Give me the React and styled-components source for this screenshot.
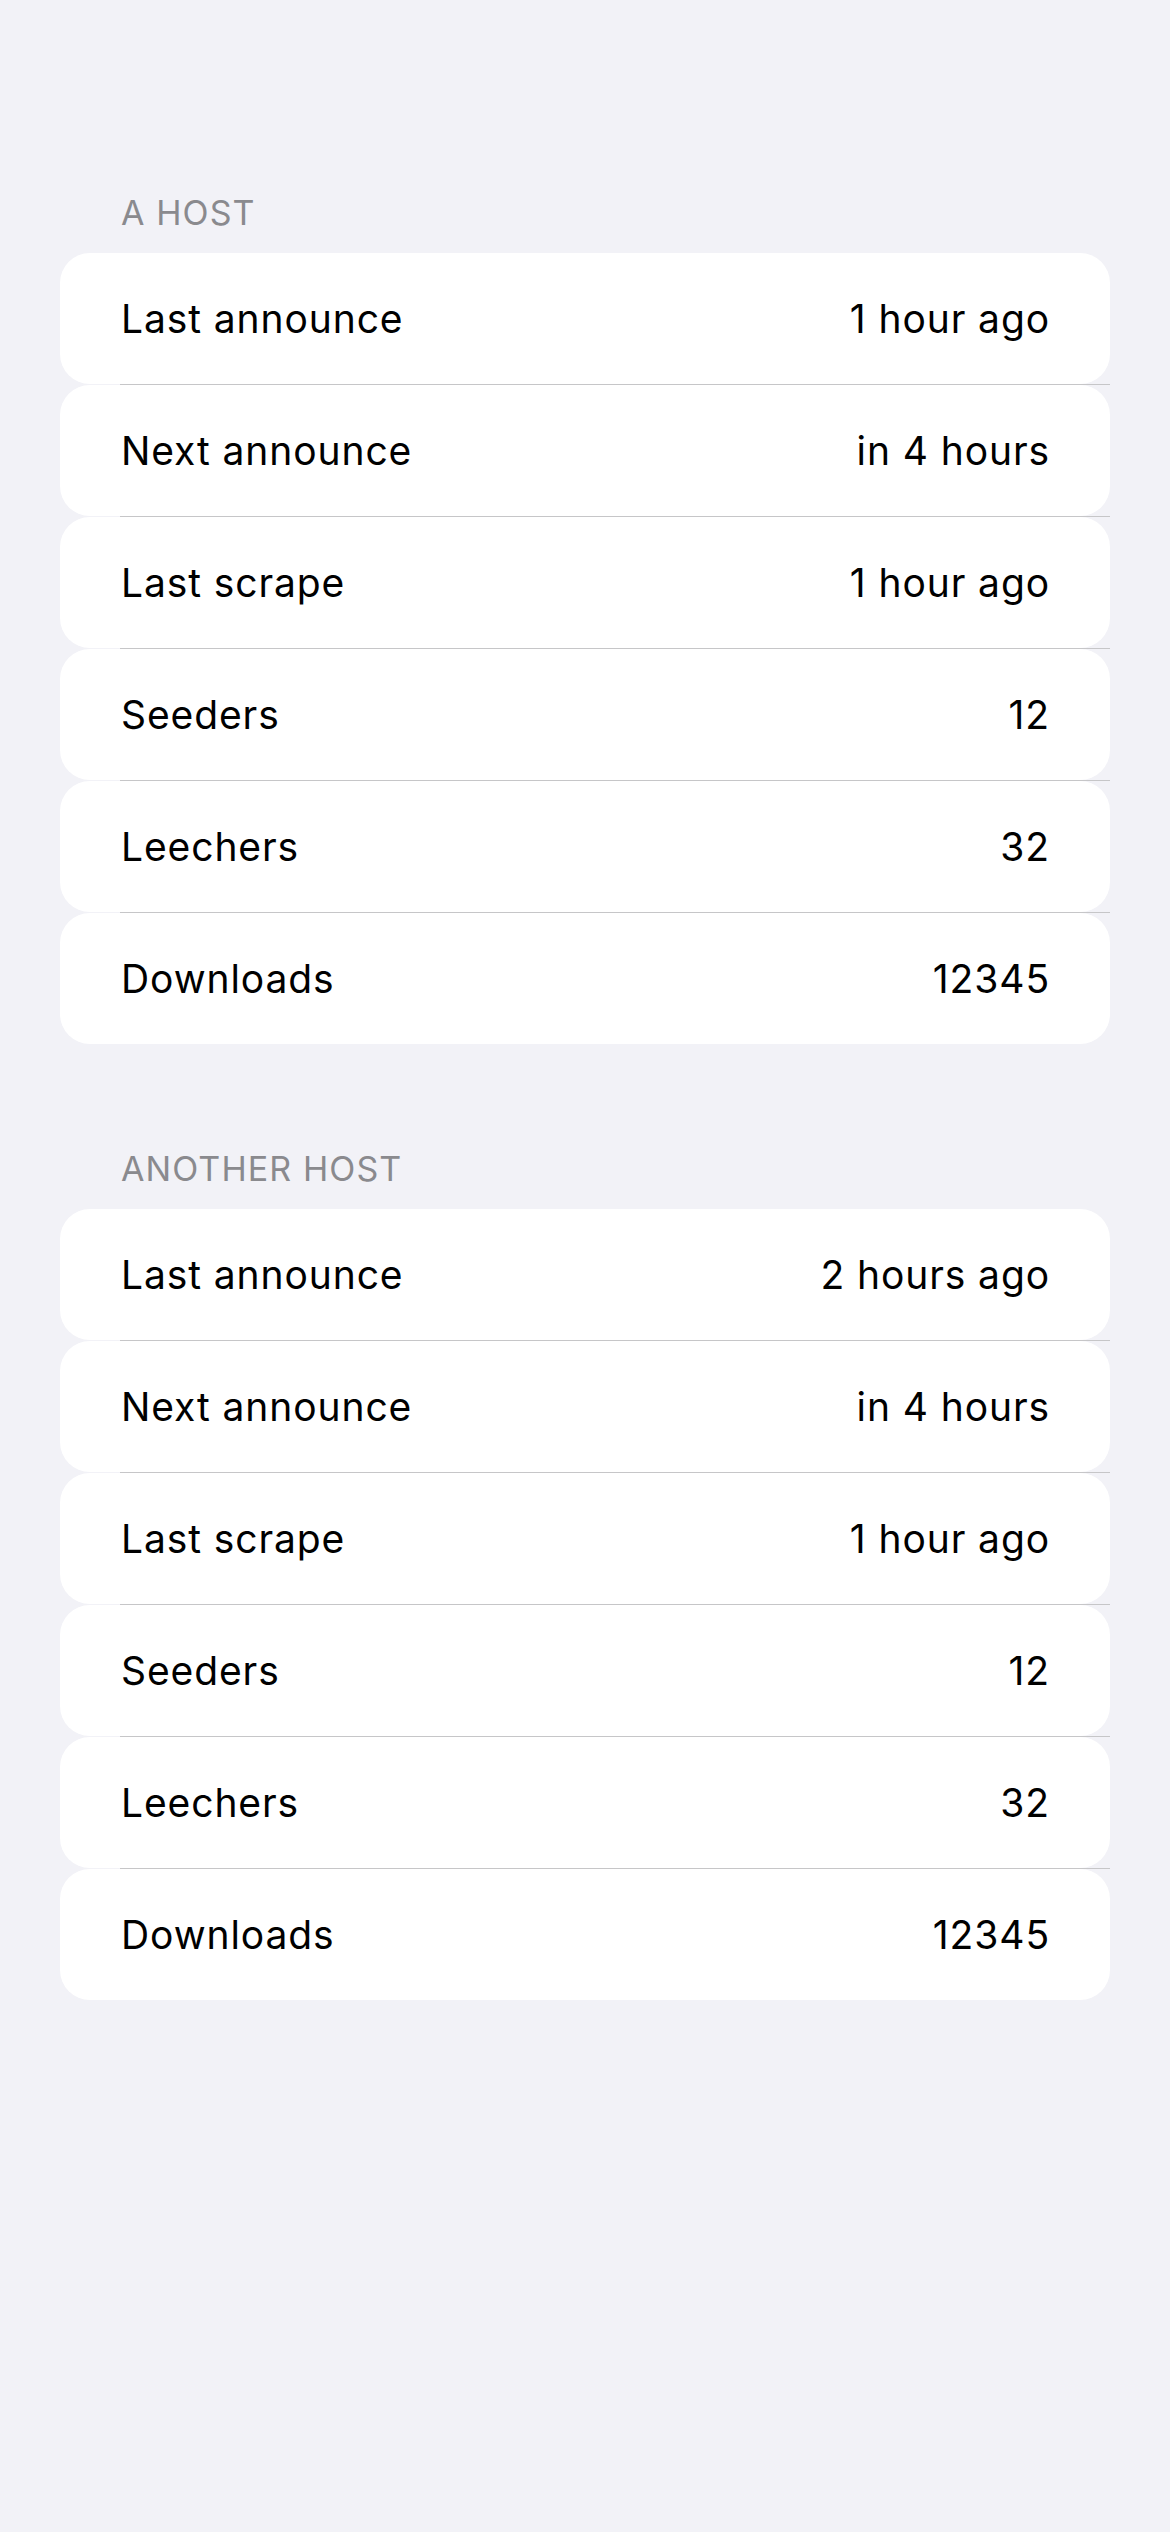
import React from "react";
import styled, { createGlobalStyle } from "styled-components";

const GlobalStyle = createGlobalStyle`
  html, body {
    margin: 0;
    padding: 0;
    background: #f2f2f7;
  }
  body {
    font-family: Inter, "Noto Sans", "Liberation Sans", sans-serif;
    -webkit-font-smoothing: antialiased;
  }
`;

const Page = styled.div`
  min-height: 2532px;
  background: #f2f2f7;
  padding: 191px 60px 0;
  box-sizing: border-box;
  display: flex;
  flex-direction: column;
`;

const Section = styled.section`
  display: flex;
  flex-direction: column;
  margin-bottom: 103px;
`;

const Header = styled.div`
  padding-left: 61px;
  font-size: 34px;
  line-height: 44px;
  color: #8a8a8e;
  text-transform: uppercase;
  letter-spacing: 1.1px;
  margin-bottom: 18px;
`;

const Card = styled.div`
  display: flex;
  align-items: center;
  justify-content: space-between;
  height: 131px;
  padding: 0 60px 0 61px;
  background: #ffffff;
  border-radius: 30px;
  font-size: 39px;
  letter-spacing: 0.9px;
  color: #000000;
`;

const Separator = styled.div`
  height: 1px;
  margin-left: 60px;
  background: #c6c6c8;
`;

const Label = styled.span``;
const Value = styled.span`
  text-align: right;
`;

const sections = [
  {
    title: "A Host",
    rows: [
      ["Last announce", "1 hour ago"],
      ["Next announce", "in 4 hours"],
      ["Last scrape", "1 hour ago"],
      ["Seeders", "12"],
      ["Leechers", "32"],
      ["Downloads", "12345"],
    ],
  },
  {
    title: "Another Host",
    rows: [
      ["Last announce", "2 hours ago"],
      ["Next announce", "in 4 hours"],
      ["Last scrape", "1 hour ago"],
      ["Seeders", "12"],
      ["Leechers", "32"],
      ["Downloads", "12345"],
    ],
  },
];

export default function App() {
  return (
    <>
      <GlobalStyle />
      <Page>
        {sections.map((s) => (
          <Section key={s.title}>
            <Header>{s.title}</Header>
            {s.rows.map(([label, value], i) => (
              <React.Fragment key={label}>
                {i > 0 && <Separator />}
                <Card>
                  <Label>{label}</Label>
                  <Value>{value}</Value>
                </Card>
              </React.Fragment>
            ))}
          </Section>
        ))}
      </Page>
    </>
  );
}
